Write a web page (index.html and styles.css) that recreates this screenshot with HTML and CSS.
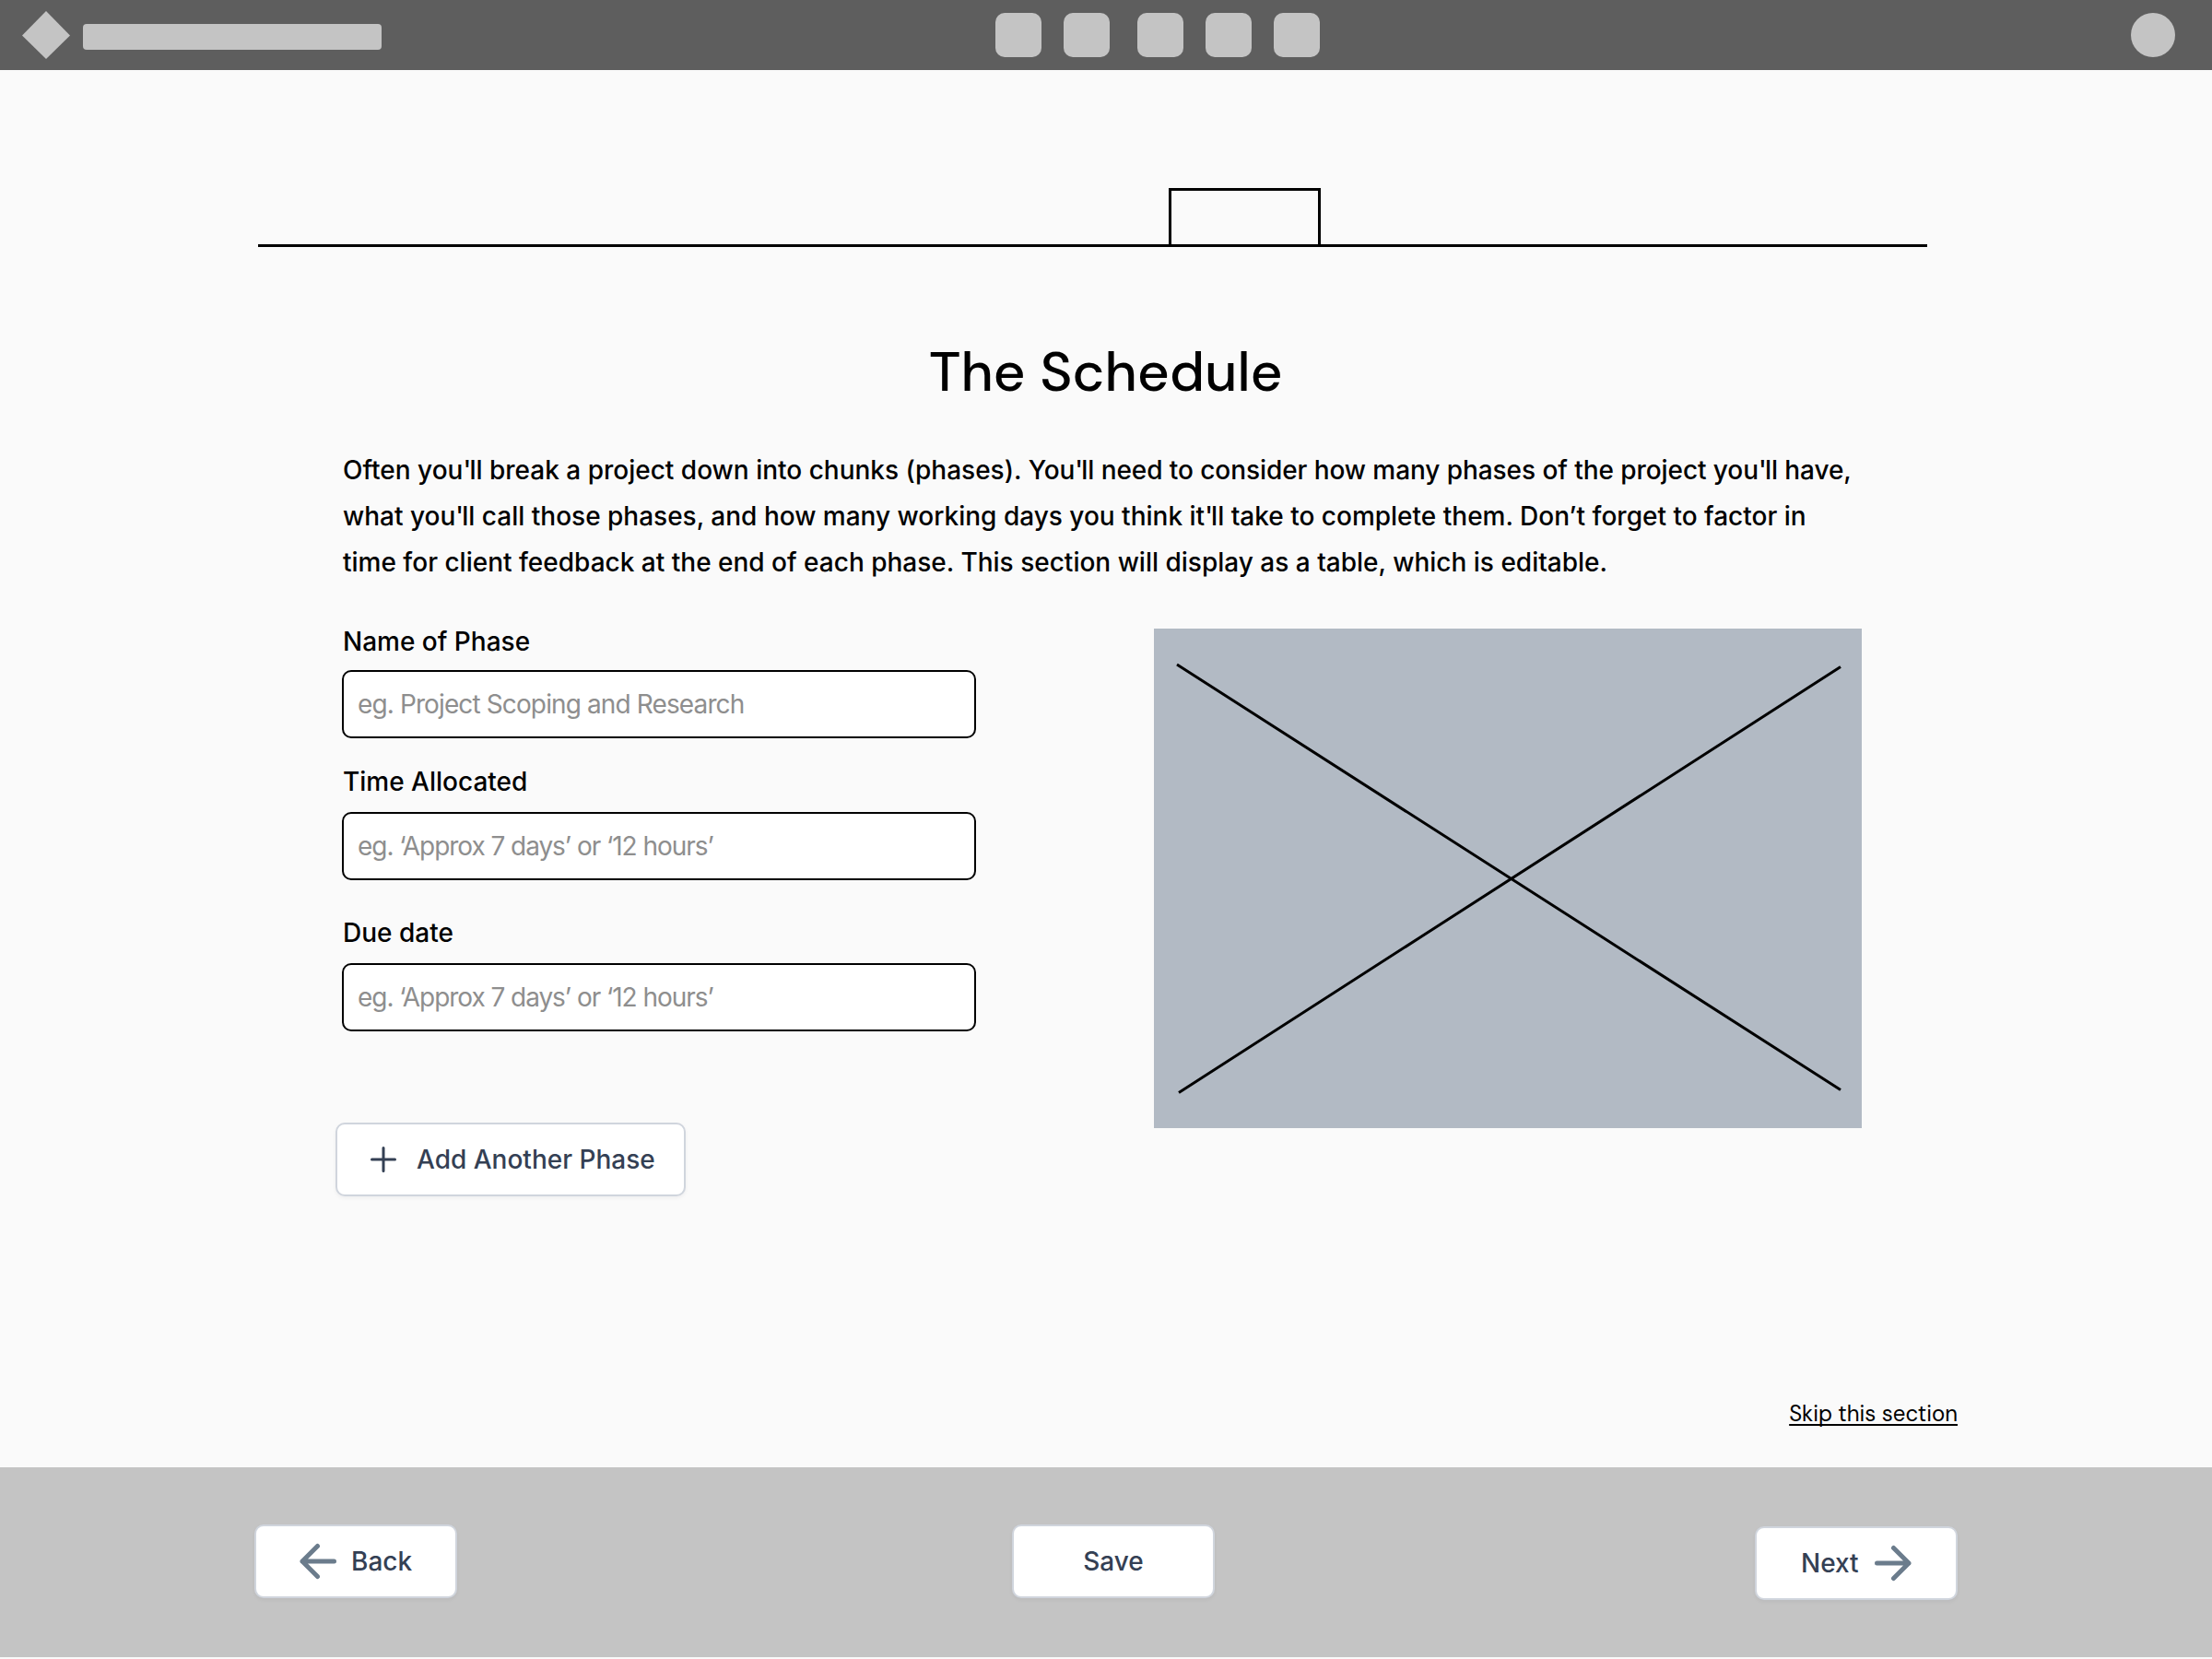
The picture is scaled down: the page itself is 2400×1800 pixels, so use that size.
FILE: index.html
```html
<!DOCTYPE html>
<html lang="en">
<head>
<meta charset="utf-8">
<title>The Schedule</title>
<link rel="stylesheet" href="styles.css">
</head>
<body>
<header class="topbar">
  <svg class="logo" viewBox="0 0 52 52"><path d="M26 0L52 26.4L26 52L0 26.4Z" fill="#c4c4c4"/></svg>
  <div class="brand"></div>
  <nav class="nav"><i></i><i></i><i class="gap"></i><i></i><i></i></nav>
  <div class="avatar"></div>
</header>
<main class="page">
  <div class="progress"><div class="tab"></div></div>
  <h1 class="title">The Schedule</h1>
  <p class="intro">Often you<span class="q">'</span>ll break a project down into chunks (phases). <span class="tight">You<span class="q">'</span>ll need to consider how many phases of the project you<span class="q">'</span>ll have,</span><br>what you<span class="q">'</span>ll call those phases, and how many working days you think it<span class="q">'</span>ll take to complete them. Don’t forget to factor in<br>time for client feedback at the end of each phase. This section will display as a table, which is editable.</p>
  <div class="columns">
    <form class="form">
      <label class="label">Name of Phase</label>
      <div class="field name">eg. Project Scoping and Research</div>
      <label class="label time">Time Allocated</label>
      <div class="field">eg. ‘Approx 7 days’ or ‘12 hours’</div>
      <label class="label due">Due date</label>
      <div class="field">eg. ‘Approx 7 days’ or ‘12 hours’</div>
      <div class="btn add">
        <svg class="plus" viewBox="0 0 28 28"><path d="M14 1.500V26.500M1.500 14H26.500"/></svg>
        <span>Add Another Phase</span>
      </div>
    </form>
    <svg class="picture" viewBox="0 0 768 542"><path d="M25 39L745 500.500M27 503.500L745 41.500"/></svg>
  </div>
  <a class="skip">Skip this section</a>
</main>
<footer class="footer">
  <div class="btn back"><svg class="arrow" viewBox="0 0 40 40"><path d="M37.500 20H3M19.500 3.500L3 20L19.500 36.500"/></svg><span>Back</span></div>
  <div class="btn save"><span>Save</span></div>
  <div class="btn next"><span>Next</span><svg class="arrow" viewBox="0 0 40 40"><path d="M2.500 20H37M20.500 3.500L37 20L20.500 36.500"/></svg></div>
</footer>
</body>
</html>
```
FILE: styles.css
```css
* { box-sizing: border-box; }
body {
  margin: 0;
  width: 2400px;
  height: 1800px;
  overflow: hidden;
  background: #fafafa;
  color: #000;
  font-family: Inter, "Liberation Sans", sans-serif;
  font-size: 28px;
  font-weight: 500;
}
svg { display: block; flex: none; }
.topbar {
  display: flex;
  height: 76px;
  padding: 0 40px 0 24px;
  background: #5e5e5e;
}
.logo { width: 52px; height: 52px; margin-top: 12px; }
.brand {
  width: 324px;
  height: 28px;
  margin: 26px 0 0 14px;
  border-radius: 4px;
  background: #c4c4c4;
}
.nav { display: flex; gap: 24px; margin: 14px 0 0 666px; }
.nav i { width: 50px; height: 48px; border-radius: 10px; background: #c4c4c4; }
.nav .gap { margin-left: 6px; }
.avatar {
  width: 48px;
  height: 48px;
  margin: 14px 0 0 auto;
  border-radius: 50%;
  background: #c4c4c4;
}
.page { display: flex; flex-direction: column; height: 1516px; }
.progress {
  width: 1811px;
  height: 64px;
  margin: 128px 0 0 280px;
  border-bottom: 3px solid #000;
}
.tab {
  width: 165px;
  height: 61px;
  margin-left: 988px;
  border: 3px solid #000;
  border-bottom: 0;
}
.title {
  height: 80px;
  margin: 96px 0 0 1008px;
  font-family: "DM Sans", Inter, sans-serif;
  font-size: 60px;
  font-weight: 500;
  line-height: 80px;
  letter-spacing: .12px;
}
.intro {
  margin: 41px 0 0 372px;
  line-height: 50px;
  white-space: nowrap;
}
.q { letter-spacing: -1.8px; }
.tight { letter-spacing: -.07px; }
.columns { display: flex; margin: 47px 0 0 364px; height: 616px; }
.form { display: flex; flex-direction: column; width: 888px; }
.label { height: 34px; margin: -3px 0 0 8px; line-height: 34px; }
.label.time { margin-top: 30px; }
.label.due { margin-top: 40px; }
.field {
  width: 688px;
  height: 74px;
  margin: 16px 0 0 7px;
  padding-left: 15px;
  border: 2px solid #000;
  border-radius: 10px;
  background: #fff;
  color: #8e8e8e;
  font-weight: 400;
  line-height: 70px;
  letter-spacing: -1.05px;
}
.field.name { margin-top: 14px; letter-spacing: -.88px; }
.btn {
  display: flex;
  align-items: center;
  height: 80px;
  border: 2px solid #d0d5dd;
  border-radius: 10px;
  background: #fff;
  color: #344054;
  box-shadow: 0 2px 4px rgba(16, 24, 40, .05);
}
.add { width: 380px; margin-top: 99px; padding-left: 36px; gap: 22px; }
.plus { width: 28px; height: 28px; fill: none; stroke: #344054; stroke-width: 3; stroke-linecap: round; }
.picture { width: 768px; height: 542px; background: #b2bac4; fill: none; stroke: #000; stroke-width: 3; }
.skip {
  margin: 220px 276px 0 auto;
  font-family: "DM Sans", Inter, sans-serif;
  font-size: 24px;
  font-weight: 400;
  text-decoration: underline;
  text-decoration-thickness: 1.5px;
  text-decoration-skip-ink: none;
  text-underline-offset: 3px;
}
.footer {
  display: flex;
  height: 206px;
  padding: 62px 276px 0;
  background: #c4c4c4;
}
.footer .btn { width: 220px; }
.arrow { width: 40px; height: 40px; fill: none; stroke: #6b7c8c; stroke-width: 5; stroke-linecap: round; stroke-linejoin: round; }
.back { padding-left: 47px; gap: 16px; }
.save { margin-left: 602px; justify-content: center; }
.next { margin: 2px 0 0 586px; padding-left: 48px; gap: 17px; }
```
